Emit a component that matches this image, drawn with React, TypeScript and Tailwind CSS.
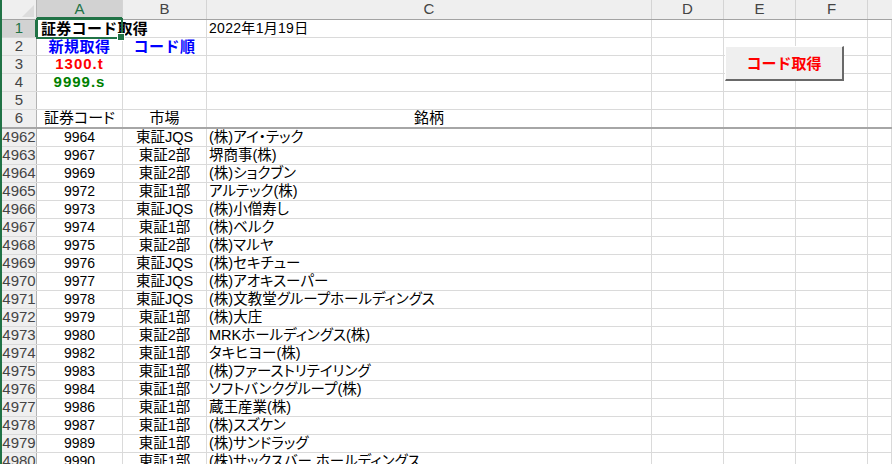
import React from 'react'

// Listed stock codes (rows 4962..4980)
const ROWS: [number, string, string, string][] = [
  [4962, '9964', '東証JQS', '(株)アイ・テック'],
  [4963, '9967', '東証2部', '堺商事(株)'],
  [4964, '9969', '東証2部', '(株)ショクブン'],
  [4965, '9972', '東証1部', 'アルテック(株)'],
  [4966, '9973', '東証JQS', '(株)小僧寿し'],
  [4967, '9974', '東証1部', '(株)ベルク'],
  [4968, '9975', '東証2部', '(株)マルヤ'],
  [4969, '9976', '東証JQS', '(株)セキチュー'],
  [4970, '9977', '東証JQS', '(株)アオキスーパー'],
  [4971, '9978', '東証JQS', '(株)文教堂グループホールディングス'],
  [4972, '9979', '東証1部', '(株)大庄'],
  [4973, '9980', '東証2部', 'MRKホールディングス(株)'],
  [4974, '9982', '東証1部', 'タキヒヨー(株)'],
  [4975, '9983', '東証1部', '(株)ファーストリテイリング'],
  [4976, '9984', '東証1部', 'ソフトバンクグループ(株)'],
  [4977, '9986', '東証1部', '蔵王産業(株)'],
  [4978, '9987', '東証1部', '(株)スズケン'],
  [4979, '9989', '東証1部', '(株)サンドラッグ'],
  [4980, '9990', '東証1部', '(株)サックスバー ホールディングス'],
]

const FONT = "[font-family:'Liberation_Sans','Noto_Sans_CJK_JP',sans-serif]"
const GOTHIC = "[font-family:'Noto_Sans_CJK_JP',sans-serif]"
const PALT = "[font-feature-settings:'palt']"

const cell = 'h-full border-r border-[#dadada] flex items-center overflow-visible whitespace-nowrap'

function RowHead({ n, active }: { n: number | string; active?: boolean }) {
  return (
    <div
      className={
        'w-[35px] shrink-0 h-full flex items-center justify-center text-[15px] border-r ' +
        (active
          ? 'bg-[#d2d2d2] text-[#217346] border-[#217346] shadow-[inset_-1px_0_0_#217346]'
          : 'bg-[#efefef] text-[#444] border-[#b3b3b3]')
      }
    >
      {n}
    </div>
  )
}

function Row({
  n,
  active,
  h = 'h-[18px] border-b border-[#dadada]',
  a,
  b,
  c,
}: {
  n: number | string
  active?: boolean
  h?: string
  a?: React.ReactNode
  b?: React.ReactNode
  c?: React.ReactNode
}) {
  return (
    <div className={'flex ' + h}>
      <RowHead n={n} active={active} />
      <div className={cell + ' w-[86px] shrink-0 justify-center'}>{a}</div>
      <div className={cell + ' w-[84px] shrink-0 justify-center'}>{b}</div>
      <div className={cell + ' w-[445px] shrink-0'}>{c}</div>
      <div className={cell + ' w-[72px] shrink-0'} />
      <div className={cell + ' w-[72px] shrink-0'} />
      <div className={cell + ' w-[72px] shrink-0'} />
      <div className={cell + ' flex-1'} />
    </div>
  )
}

function ColHead({ label, w, active }: { label: string; w: string; active?: boolean }) {
  return (
    <div
      className={
        w +
        ' h-full flex items-center justify-center text-[15px] border-r border-[#d4d4d4] ' +
        (active ? 'bg-[#d2d2d2] text-[#217346] shadow-[inset_0_-2px_0_#217346]' : 'text-[#444]')
      }
    >
      {label}
    </div>
  )
}

export default function App() {
  return (
    <div className={'relative w-[892px] h-[464px] overflow-hidden bg-white text-black border-l-2 border-[#217346] ' + FONT}>
      {/* Column headers */}
      <div className="flex h-[20px] bg-[#efefef] border-b border-[#a3a3a3]">
        <div className="w-[35px] shrink-0 h-full border-r border-[#b3b3b3] flex items-end justify-end p-[2px]">
          <div className="w-0 h-0 border-l-[12px] border-l-transparent border-b-[12px] border-b-[#dcdcdc]" />
        </div>
        <ColHead label="A" w="w-[86px] shrink-0" active />
        <ColHead label="B" w="w-[84px] shrink-0" />
        <ColHead label="C" w="w-[445px] shrink-0" />
        <ColHead label="D" w="w-[72px] shrink-0" />
        <ColHead label="E" w="w-[72px] shrink-0" />
        <ColHead label="F" w="w-[72px] shrink-0" />
        <div className="flex-1" />
      </div>

      {/* Frozen rows */}
      <Row
        n={1}
        active
        a={
          <span className={'self-center w-full pl-[4px] font-bold text-[15px] tracking-[0.3px] ' + GOTHIC}>
            証券コード取得
          </span>
        }
        c={<span className="pl-[2px] text-[14px] tracking-[0.3px]">2022年1月19日</span>}
      />
      <Row
        n={2}
        a={<span className={'font-bold text-[15px] tracking-[0.5px] text-[#0000ff] ' + GOTHIC}>新規取得</span>}
        b={<span className={'font-bold text-[15px] tracking-[0.5px] text-[#0000ff] ' + GOTHIC}>コード順</span>}
      />
      <Row n={3} a={<span className="font-bold text-[15px] tracking-[1px] text-[#ff0000]">1300.t</span>} />
      <Row n={4} a={<span className="font-bold text-[15px] tracking-[1px] text-[#008000]">9999.s</span>} />
      <Row n={5} />
      <Row
        n={6}
        h="h-[19px] border-b-2 border-[#a6a6a6]"
        a={<span className={'text-[15px] ' + PALT}>証券コード</span>}
        b={<span className="text-[15px]">市場</span>}
        c={<span className="w-full text-center text-[15px]">銘柄</span>}
      />

      {/* Data */}
      <div className={PALT}>
        {ROWS.map(([n, code, mkt, name]) => (
          <Row
            key={n}
            n={n}
            a={<span className="text-[14px]">{code}</span>}
            b={<span className="text-[14.5px]">{mkt}</span>}
            c={<span className="pl-[2px] text-[14.5px]">{name}</span>}
          />
        ))}
      </div>

      {/* Active cell A1 */}
      <div className="absolute left-[34px] top-[18px] w-[87px] h-[21px] border-2 border-[#217346] pointer-events-none">
        <div className="absolute right-[-4px] bottom-[-4px] w-[6px] h-[6px] bg-[#217346] border border-white box-content" />
      </div>

      {/* Form button */}
      <button
        className={
          'absolute left-[723px] top-[46px] w-[119px] h-[35px] bg-[#efefef] border-t border-l border-t-white border-l-white border-r-2 border-b-2 border-r-[#696969] border-b-[#696969] flex items-center justify-center font-bold text-[15px] text-[#ff0000] ' +
          GOTHIC
        }
      >
        コード取得
      </button>
    </div>
  )
}
